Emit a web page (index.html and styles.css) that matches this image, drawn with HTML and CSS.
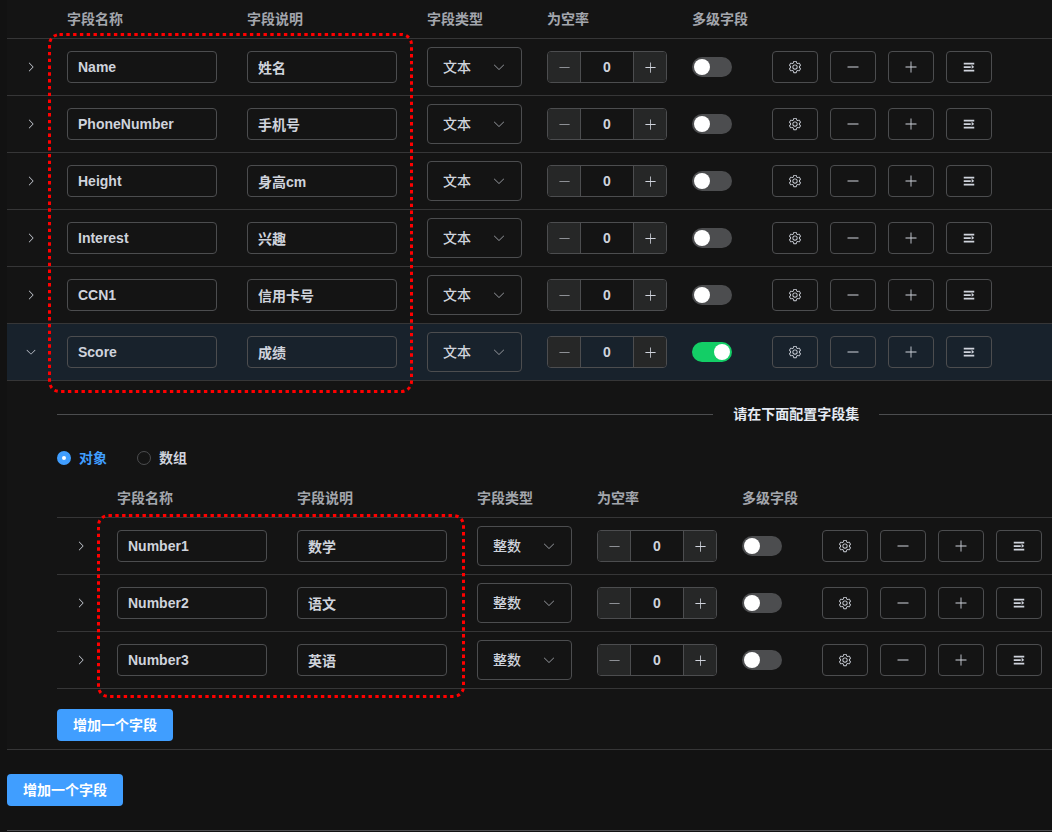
FILE: index.html
```html
<!DOCTYPE html>
<html lang="zh-CN">
<head>
    <meta charset="UTF-8">
    <meta name="viewport" content="width=device-width, initial-scale=1.0">
    <title>字段配置</title>
    <link rel="stylesheet" href="styles.css">
</head>
<body>
    <svg class="icon-defs" aria-hidden="true">
        <symbol id="arrow-right" viewBox="0 0 1024 1024"><path d="M340.864 149.312a30.592 30.592 0 0 0 0 42.752L652.736 512 340.864 831.872a30.592 30.592 0 0 0 0 42.752 29.12 29.12 0 0 0 41.728 0L714.24 534.336a32 32 0 0 0 0-44.672L382.592 149.376a29.12 29.12 0 0 0-41.728 0z"/></symbol>
        <symbol id="arrow-down" viewBox="0 0 1024 1024"><path d="M831.872 340.864 512 652.672 192.128 340.864a30.592 30.592 0 0 0-42.752 0 29.12 29.12 0 0 0 0 41.6L489.664 714.24a32 32 0 0 0 44.672 0l340.288-331.712a29.12 29.12 0 0 0 0-41.728 30.592 30.592 0 0 0-42.752.064z"/></symbol>
        <symbol id="minus" viewBox="0 0 1024 1024"><path d="M128 544h768a32 32 0 1 0 0-64H128a32 32 0 0 0 0 64z"/></symbol>
        <symbol id="plus" viewBox="0 0 1024 1024"><path d="M480 480V128a32 32 0 0 1 64 0v352h352a32 32 0 1 1 0 64H544v352a32 32 0 1 1-64 0V544H128a32 32 0 0 1 0-64h352z"/></symbol>
        <symbol id="expand" viewBox="0 0 1024 1024"><path d="M128 192h768v128H128V192zm0 256h512v128H128V448zm0 256h768v128H128V704zm576-352 192 160-192 128V352z"/></symbol>
        <symbol id="setting" viewBox="0 0 1024 1024"><path d="M600.704 64a32 32 0 0 1 30.464 22.208l35.2 109.376c14.784 7.232 28.928 15.36 42.432 24.512l112.384-24.192a32 32 0 0 1 34.432 15.36L944.32 364.8a32 32 0 0 1-4.032 37.504l-77.12 85.12a357.12 357.12 0 0 1 0 49.024l77.12 85.248a32 32 0 0 1 4.032 37.504l-88.704 153.6a32 32 0 0 1-34.432 15.296L708.8 803.904c-13.44 9.088-27.648 17.28-42.368 24.512l-35.264 109.376A32 32 0 0 1 600.704 960H423.296a32 32 0 0 1-30.464-22.208L357.696 828.48a351.616 351.616 0 0 1-42.56-24.64l-112.32 24.256a32 32 0 0 1-34.432-15.36L79.68 659.2a32 32 0 0 1 4.032-37.504l77.12-85.248a357.12 357.12 0 0 1 0-48.896l-77.12-85.248A32 32 0 0 1 79.68 364.8l88.704-153.6a32 32 0 0 1 34.432-15.296l112.32 24.256c13.568-9.152 27.776-17.408 42.56-24.64l35.2-109.312A32 32 0 0 1 423.232 64H600.64zm-23.424 64H446.72l-36.352 113.088-24.512 11.968a294.113 294.113 0 0 0-34.816 20.096l-22.656 15.36-116.224-25.088-65.28 113.152 79.68 88.192-1.92 27.136a293.12 293.12 0 0 0 0 40.192l1.92 27.136-79.808 88.192 65.344 113.152 116.224-25.024 22.656 15.296a294.113 294.113 0 0 0 34.816 20.096l24.512 11.968L446.72 896h130.688l36.48-113.152 24.448-11.904a288.282 288.282 0 0 0 34.752-20.096l22.592-15.296 116.288 25.024 65.28-113.152-79.744-88.192 1.92-27.136a293.12 293.12 0 0 0 0-40.256l-1.92-27.136 79.808-88.128-65.344-113.152-116.288 24.96-22.592-15.232a287.616 287.616 0 0 0-34.752-20.096l-24.448-11.904L577.344 128zM512 320a192 192 0 1 1 0 384 192 192 0 0 1 0-384zm0 64a128 128 0 1 0 0 256 128 128 0 0 0 0-256z"/></symbol>
    </svg>

    <main class="page">
        <div class="table-wrap">
            <table class="field-table">
                <thead class="field-head"></thead>
                <tbody id="fields"></tbody>
                <tbody>
                    <tr>
                        <td class="expanded" colspan="7">
                            <div class="divider">请在下面配置字段集</div>

                            <div class="radio-group">
                                <label class="radio"><input type="radio" name="kind" checked><span>对象</span></label>
                                <label class="radio"><input type="radio" name="kind"><span>数组</span></label>
                            </div>

                            <div class="table-wrap">
                                <table class="field-table">
                                    <thead class="field-head"></thead>
                                    <tbody id="subFields"></tbody>
                                </table>
                                <svg class="mark mark-sub" aria-hidden="true"><rect x="1.5" y="1.5" width="365" height="181" rx="10"/></svg>
                            </div>

                            <button class="add-btn" type="button">增加一个字段</button>
                        </td>
                    </tr>
                </tbody>
            </table>
            <svg class="mark mark-main" aria-hidden="true"><rect x="1.5" y="1.5" width="362" height="357" rx="10"/></svg>
        </div>

        <div class="footer">
            <button class="add-btn" type="button">增加一个字段</button>
        </div>
    </main>

    <script>
        const fields = [
            { name: "Name", desc: "姓名", type: "文本" },
            { name: "PhoneNumber", desc: "手机号", type: "文本" },
            { name: "Height", desc: "身高cm", type: "文本" },
            { name: "Interest", desc: "兴趣", type: "文本" },
            { name: "CCN1", desc: "信用卡号", type: "文本" },
            { name: "Score", desc: "成绩", type: "文本", open: true }
        ];

        const subFields = [
            { name: "Number1", desc: "数学", type: "整数" },
            { name: "Number2", desc: "语文", type: "整数" },
            { name: "Number3", desc: "英语", type: "整数" }
        ];

        function icon(name) {
            return `<svg class="icon" aria-hidden="true"><use href="#${name}"/></svg>`;
        }

        function fieldRow(field) {
            return `<tr class="${field.open ? "row open" : "row"}">
                <td class="toggle-cell"><button class="toggle" type="button" aria-label="展开">${icon(field.open ? "arrow-down" : "arrow-right")}</button></td>
                <td><input class="text-input" type="text" aria-label="字段名称" value="${field.name}"></td>
                <td><input class="text-input" type="text" aria-label="字段说明" value="${field.desc}"></td>
                <td>
                    <div class="select-box">
                        <select aria-label="字段类型"><option>${field.type}</option></select>
                        ${icon("arrow-down")}
                    </div>
                </td>
                <td>
                    <div class="number-box">
                        <button class="minus" type="button" aria-label="减少">${icon("minus")}</button>
                        <input type="text" inputmode="numeric" aria-label="为空率" value="0">
                        <button type="button" aria-label="增加">${icon("plus")}</button>
                    </div>
                </td>
                <td><input class="switch" type="checkbox" aria-label="多级字段" ${field.open ? "checked" : ""}></td>
                <td>
                    <div class="actions">
                        <button type="button" aria-label="设置">${icon("setting")}</button>
                        <button type="button" aria-label="删除">${icon("minus")}</button>
                        <button type="button" aria-label="添加">${icon("plus")}</button>
                        <button type="button" aria-label="排序">${icon("expand")}</button>
                    </div>
                </td>
            </tr>`;
        }

        document.querySelectorAll(".field-head").forEach(head => {
            head.innerHTML = `<tr>
                <th class="col-toggle"></th>
                <th class="col-text">字段名称</th>
                <th class="col-text">字段说明</th>
                <th class="col-type">字段类型</th>
                <th class="col-rate">为空率</th>
                <th class="col-switch">多级字段</th>
                <th></th>
            </tr>`;
        });
        document.getElementById("fields").innerHTML = fields.map(fieldRow).join("");
        document.getElementById("subFields").innerHTML = subFields.map(fieldRow).join("");
    </script>
</body>
</html>
```

FILE: styles.css
```css
* {
    margin: 0;
    padding: 0;
    box-sizing: border-box;
}

body {
    background: #121212;
    color: #cfd3dc;
    font-family: "Liberation Sans", "Noto Sans CJK SC", sans-serif;
    font-size: 14px;
    font-weight: 700;
    line-height: 22px;
    overflow-x: hidden;
}

button, input, select {
    font: inherit;
    color: inherit;
    outline: none;
}

button {
    display: inline-flex;
    align-items: center;
    justify-content: center;
    cursor: pointer;
}

.icon-defs {
    display: none;
}

.icon {
    display: block;
    width: 14px;
    height: 14px;
    fill: currentColor;
}

.page {
    padding-left: 7px;
}

/* tables */
.table-wrap {
    position: relative;
}

.field-table {
    width: 100%;
    table-layout: fixed;
    border-collapse: separate;
    border-spacing: 0;
    background: #141414;
}

.field-table th {
    height: 39px;
    padding: 0 12px;
    border-bottom: 1px solid #363637;
    color: #a3a6ad;
    text-align: left;
    white-space: nowrap;
}

.field-table td {
    height: 57px;
    padding: 0 12px;
    border-bottom: 1px solid #363637;
    vertical-align: middle;
}

.col-toggle {
    width: 48px;
}

.col-text {
    width: 180px;
}

.col-type {
    width: 120px;
}

.col-rate {
    width: 145px;
}

.col-switch {
    width: 80px;
}

.field-table th.col-switch {
    padding-right: 0;
}

.open {
    background: #18222c;
}

.toggle {
    width: 24px;
    height: 24px;
    border: none;
    background: none;
}

.toggle .icon {
    width: 12px;
    height: 12px;
}

/* controls */
.text-input {
    display: block;
    width: 150px;
    height: 32px;
    padding: 0 10px;
    border: 1px solid #4c4d4f;
    border-radius: 4px;
    background: transparent;
}

.select-box {
    position: relative;
    width: 95px;
}

.select-box select {
    display: block;
    width: 100%;
    height: 40px;
    padding: 0 15px;
    border: 1px solid #4c4d4f;
    border-radius: 4px;
    background: transparent;
    appearance: none;
    font-weight: 500;
}

.select-box .icon {
    position: absolute;
    top: 13px;
    right: 16px;
    color: #8d9095;
    pointer-events: none;
}

.number-box {
    display: flex;
    width: 120px;
    height: 32px;
    border: 1px solid #4c4d4f;
    border-radius: 4px;
    overflow: hidden;
}

.number-box button {
    flex: 0 0 33px;
    border: none;
    border-left: 1px solid #4c4d4f;
    background: #262727;
}

.number-box .minus {
    border-left: none;
    border-right: 1px solid #4c4d4f;
    color: #8d9095;
}

.number-box input {
    flex: 1;
    min-width: 0;
    border: none;
    background: transparent;
    text-align: center;
}

.number-box .icon {
    width: 13px;
    height: 13px;
}

.switch {
    display: block;
    width: 40px;
    height: 20px;
    padding: 2px;
    border-radius: 10px;
    background: #4c4d4f;
    appearance: none;
    cursor: pointer;
}

.switch::before {
    content: "";
    display: block;
    width: 16px;
    height: 16px;
    border-radius: 50%;
    background: #fff;
}

.switch:checked {
    background: #13ce66;
}

.switch:checked::before {
    margin-left: auto;
}

.actions {
    display: flex;
    gap: 12px;
}

.actions button {
    flex: 0 0 46px;
    height: 32px;
    border: 1px solid #4c4d4f;
    border-radius: 4px;
    background: transparent;
}

.add-btn {
    height: 32px;
    padding: 0 16px;
    border: none;
    border-radius: 4px;
    background: #409eff;
    color: #fff;
}

/* expanded row */
.field-table .expanded {
    padding: 22px 0 8px 50px;
}

.divider {
    display: flex;
    align-items: center;
    gap: 20px;
    color: #e5eaf3;
}

.divider::before, .divider::after {
    content: "";
    flex: 19;
    height: 1px;
    background: #4c4d4f;
}

.divider::after {
    flex: 5;
}

.radio-group {
    display: flex;
    gap: 30px;
    height: 32px;
    margin: 17px 0 5px;
}

.radio {
    display: flex;
    align-items: center;
    gap: 8px;
    cursor: pointer;
}

.radio input {
    width: 14px;
    height: 14px;
    border: 1px solid #4c4d4f;
    border-radius: 50%;
    appearance: none;
}

.radio input:checked {
    border: 5px solid #409eff;
    background: #fff;
}

.radio input:checked + span {
    color: #409eff;
}

.expanded .add-btn {
    margin-top: 20px;
    vertical-align: top;
}

.footer {
    padding: 24px 0;
    border-bottom: 1px solid #4c4d4f;
}

/* dotted outlines over the name columns */
.mark {
    position: absolute;
    overflow: visible;
    pointer-events: none;
}

.mark rect {
    fill: none;
    stroke: #f00;
    stroke-width: 3;
    stroke-dasharray: 3.4 3.4;
}

.mark-main {
    top: 33px;
    left: 41px;
    width: 365px;
    height: 360px;
}

.mark-sub {
    top: 35px;
    left: 40px;
    width: 368px;
    height: 184px;
}
```
